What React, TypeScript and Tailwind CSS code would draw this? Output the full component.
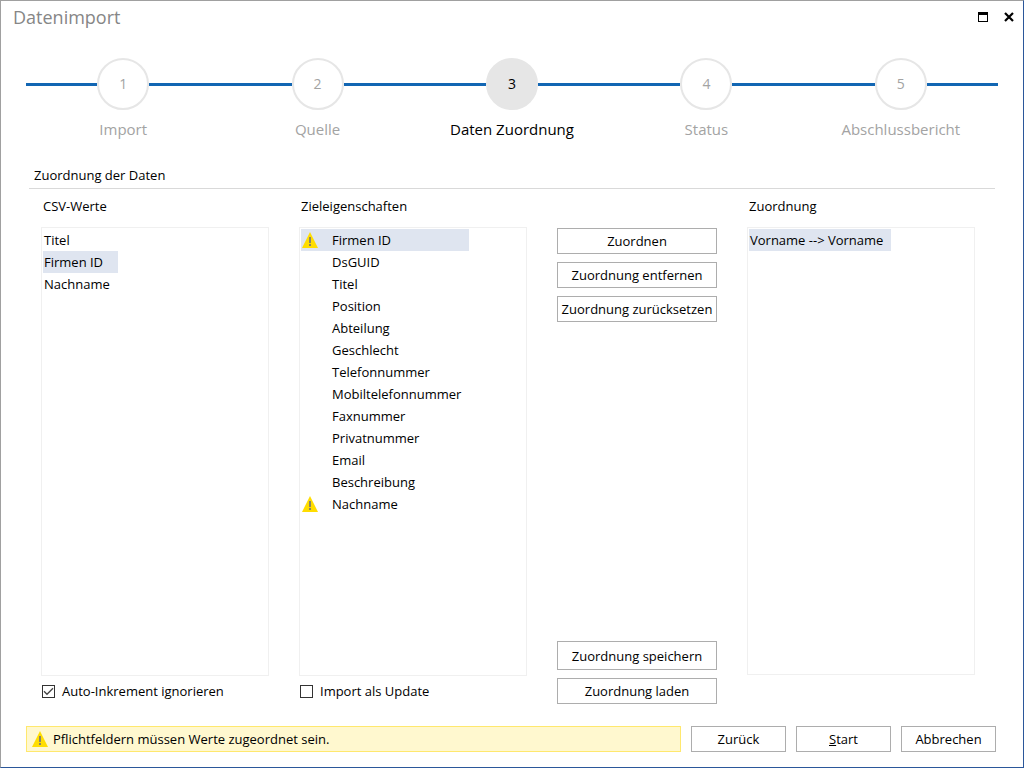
import { useState } from "react";

type Item = { name: string; required?: boolean };

const steps = ["Import", "Quelle", "Daten Zuordnung", "Status", "Abschlussbericht"];
const currentStep = 2;

const csvValues: Item[] = [{ name: "Titel" }, { name: "Firmen ID" }, { name: "Nachname" }];

const targets: Item[] = [
  { name: "Firmen ID", required: true },
  { name: "DsGUID" },
  { name: "Titel" },
  { name: "Position" },
  { name: "Abteilung" },
  { name: "Geschlecht" },
  { name: "Telefonnummer" },
  { name: "Mobiltelefonnummer" },
  { name: "Faxnummer" },
  { name: "Privatnummer" },
  { name: "Email" },
  { name: "Beschreibung" },
  { name: "Nachname", required: true },
];

const mappings: Item[] = [{ name: "Vorname --> Vorname" }];

function WarningIcon() {
  return (
    <svg width="16" height="16" viewBox="0 0 16 16" className="shrink-0" aria-hidden="true">
      <path d="M8 0 16 16H0Z" fill="#ffdd00" />
      <path d="M7 5h2v6H7zM7 12h2v2H7z" fill="#8a8468" />
    </svg>
  );
}

function Stepper() {
  return (
    <ol className="mt-[25px] grid grid-cols-5 px-[25px]">
      {steps.map((label, i) => (
        <li key={label} className={i === currentStep ? "text-black" : "text-[#a3a3a3]"}>
          <div className="flex items-center">
            <span className="h-[3px] flex-1 bg-[#1266b3]" />
            <span
              className={`flex size-[52px] items-center justify-center rounded-full border-2 border-[#e6e6e6] text-sm ${
                i === currentStep ? "bg-[#e6e6e6]" : "bg-white"
              }`}
            >
              {i + 1}
            </span>
            <span className="h-[3px] flex-1 bg-[#1266b3]" />
          </div>
          <div className="mt-[9px] text-center text-[15px] leading-5">{label}</div>
        </li>
      ))}
    </ol>
  );
}

function ListBox({ title, items, initial, icons }: { title: string; items: Item[]; initial: number; icons?: boolean }) {
  const [selected, setSelected] = useState(initial);
  return (
    <>
      <h3 className="px-0.5">{title}</h3>
      <div className="mt-[11px] flex-1 border border-[#f0f0f0] p-px">
        <ul aria-label={title} className="w-fit">
          {items.map((item, i) => (
            <li key={item.name}>
              <button
                type="button"
                aria-pressed={i === selected}
                onClick={() => setSelected(i)}
                className={`flex h-[22px] w-full items-center pr-2 pl-px whitespace-nowrap ${
                  i === selected ? "bg-[#dfe5f0]" : ""
                }`}
              >
                {icons && <span className="w-[30px]">{item.required && <WarningIcon />}</span>}
                {item.name}
              </button>
            </li>
          ))}
        </ul>
      </div>
    </>
  );
}

function Button({ className = "h-[26px]", children }: { className?: string; children: React.ReactNode }) {
  return (
    <button
      type="button"
      className={`flex items-center justify-center border border-[#adadad] bg-white whitespace-nowrap hover:bg-[#dfe5f0] ${className}`}
    >
      {children}
    </button>
  );
}

function Checkbox({ label, initial }: { label: string; initial: boolean }) {
  const [checked, setChecked] = useState(initial);
  return (
    <label className="mt-[5px] mb-[3px] flex items-center gap-[7px] pl-px">
      <span className="relative flex size-[13px]">
        <input
          type="checkbox"
          checked={checked}
          onChange={(e) => setChecked(e.target.checked)}
          className="size-[13px] appearance-none border border-[#333333] bg-white"
        />
        {checked && (
          <svg viewBox="0 0 13 13" className="pointer-events-none absolute inset-0" aria-hidden="true">
            <path d="M2 6.3 5 9.3 11 3.3" fill="none" stroke="#444" strokeWidth="1.3" />
          </svg>
        )}
      </span>
      {label}
    </label>
  );
}

export default function App() {
  return (
    <div className="flex min-h-screen flex-col border border-t-[#a0a0a0] border-r-[#2b579a] border-b-[#2b579a] border-l-[#a0a0a0] bg-white font-['Open_Sans','Noto_Sans',sans-serif] text-[13px] leading-5 text-black">
      <header className="flex h-8 items-center justify-between pr-[9px] pl-3">
        <h1 className="text-lg leading-6 text-[#868686]">Datenimport</h1>
        <div className="flex gap-4">
          <button type="button" aria-label="Maximieren">
            <svg width="10" height="10" viewBox="0 0 10 10" shapeRendering="crispEdges">
              <path d="M0 0h10v10H0zM1 3v6h8V3z" fillRule="evenodd" />
            </svg>
          </button>
          <button type="button" aria-label="Schließen">
            <svg width="10" height="10" viewBox="0 0 10 10">
              <path d="M1 1 9 9M9 1 1 9" stroke="#000" strokeWidth="2.2" />
            </svg>
          </button>
        </div>
      </header>

      <Stepper />

      <main className="mt-[26px] flex flex-1 flex-col px-7">
        <h2 className="border-b border-[#d9d9d9] px-[5px] pb-[3px]">Zuordnung der Daten</h2>
        <div className="mt-[7px] flex flex-1 gap-[30px] pr-5 pl-3">
          <section className="flex flex-1 flex-col">
            <ListBox title="CSV-Werte" items={csvValues} initial={1} />
            <Checkbox label="Auto-Inkrement ignorieren" initial={true} />
          </section>
          <section className="flex flex-1 flex-col">
            <ListBox title="Zieleigenschaften" items={targets} initial={0} icons />
            <Checkbox label="Import als Update" initial={false} />
          </section>
          <div className="flex w-40 flex-col gap-2 pt-8">
            <Button>Zuordnen</Button>
            <Button>Zuordnung entfernen</Button>
            <Button>Zuordnung zurücksetzen</Button>
            <Button className="mt-auto h-[29px]">Zuordnung speichern</Button>
            <Button>Zuordnung laden</Button>
          </div>
          <section className="flex flex-1 flex-col pb-[29px]">
            <ListBox title="Zuordnung" items={mappings} initial={0} />
          </section>
        </div>
      </main>

      <footer className="mt-[22px] flex gap-2.5 pr-[27px] pb-[15px] pl-[25px]">
        <p role="alert" className="flex flex-1 items-center gap-[5px] border border-[#ffe86e] bg-[#fff8cf] px-[5px]">
          <WarningIcon />
          Pflichtfeldern müssen Werte zugeordnet sein.
        </p>
        <Button className="h-[26px] w-[95px]">Zurück</Button>
        <Button className="h-[26px] w-[95px]">
          <span><span className="underline">S</span>tart</span>
        </Button>
        <Button className="h-[26px] w-[95px]">Abbrechen</Button>
      </footer>
    </div>
  );
}
